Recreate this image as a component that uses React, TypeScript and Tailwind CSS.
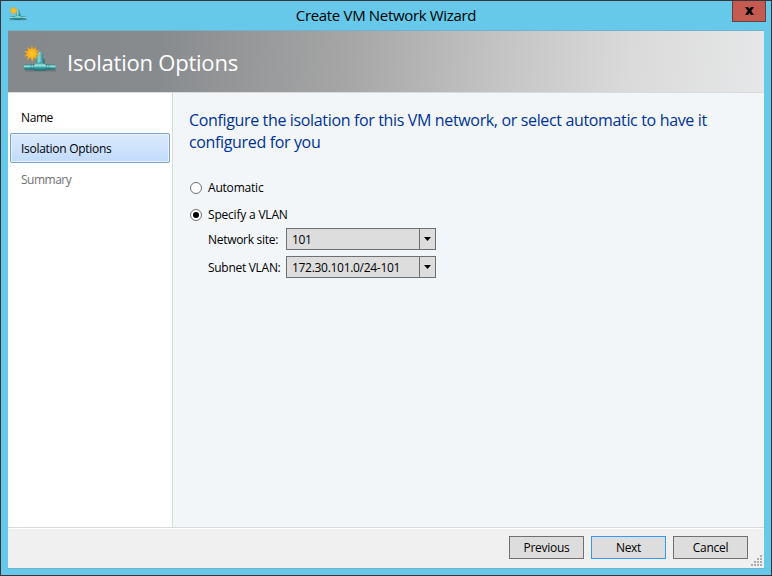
import React from "react";

function NetworkIcon({ className, small = false }: { className: string; small?: boolean }) {
  return (
    <svg className={className} viewBox="0 0 34 28" preserveAspectRatio="none" aria-hidden="true">
      <defs>
        <linearGradient id={small ? "ps" : "pl"} x1="0" y1="0" x2="0" y2="1">
          <stop offset="0" stopColor="#2c8c90" />
          <stop offset="0.35" stopColor="#a5e6e2" />
          <stop offset="0.65" stopColor="#38a0a3" />
          <stop offset="1" stopColor="#14666c" />
        </linearGradient>
        <linearGradient id={small ? "vs" : "vl"} x1="0" y1="0" x2="1" y2="0">
          <stop offset="0" stopColor="#2b9196" />
          <stop offset="0.35" stopColor="#8fdcd9" />
          <stop offset="1" stopColor="#14666c" />
        </linearGradient>
        <radialGradient id={small ? "ss" : "sl"}>
          <stop offset="0" stopColor="#ffc928" />
          <stop offset="0.6" stopColor="#fbae17" />
          <stop offset="1" stopColor="#e9920f" />
        </radialGradient>
      </defs>
      <path d="M2 24.500h31v2H2z" fill="#555f63" opacity="0.5" />
      <path d="M14.500 9Q15 6.500 17.200 6.500T20 9V13L21.500 14.500V20H13V14z" fill={small ? "url(#vs)" : "url(#vl)"} />
      <rect x="1" y="19.500" width="31.500" height="5" rx="1" fill={small ? "url(#ps)" : "url(#pl)"} />
      <path d="M11 20.500Q13 17.500 17 17.500T23 20.500V25.500H11z" fill={small ? "url(#ps)" : "url(#pl)"} />
      <path d="M10.500 19.500v5.500M23.500 19.500v5.500M8 19.500v5M26 19.500v5" stroke="#17696f" strokeWidth="0.600" opacity="0.7" />
      <path
        d="M9 .2L10.200 4.500 13.200 1.600 12.700 5.600 16.800 5 13.400 7.800 17.200 10.200 12.900 10.300 14.300 14.600 10.900 12.200 9.400 17 7.600 12.400 3.800 15.300 5 10.900.8 11.400 4.300 8.600.8 6 5.200 6 4 1.800 7.500 4.500z"
        fill={small ? "url(#ss)" : "url(#sl)"}
      />
    </svg>
  );
}

function Radio({ label, checked = false }: { label: string; checked?: boolean }) {
  return (
    <label className="flex h-[16px] items-center">
      <span className="mr-[6px] flex size-[12px] items-center justify-center rounded-full border border-[#707070] bg-white">
        {checked && <span className="size-[6px] rounded-full bg-black" />}
      </span>
      <span className="text-[12px] leading-[16px] tracking-[-0.2px]">{label}</span>
    </label>
  );
}

function SelectRow({ label, value }: { label: string; value: string }) {
  return (
    <div className="flex h-[22px] items-center pl-[19px]">
      <span className="w-[78px] pt-[2px] text-[12px] leading-[16px] tracking-[-0.29px]">{label}</span>
      <button className="flex h-[22px] w-[150px] border border-[#707070] bg-[#dddddd] text-left">
        <span className="flex-1 pt-[2px] pl-[5px] text-[12px] leading-[17px] tracking-[-0.3px]">{value}</span>
        <span className="flex h-full w-[16px] items-center justify-center border-l border-[#707070]">
          <svg width="7" height="4" viewBox="0 0 7 4">
            <path d="M0 0h7L3.500 4z" />
          </svg>
        </span>
      </button>
    </div>
  );
}

function Button({ label, primary = false }: { label: string; primary?: boolean }) {
  return (
    <button
      className={`h-[23px] w-[75px] border bg-[#dddddd] text-[12px] leading-[21px] tracking-[-0.28px] ${
        primary ? "border-[#3399ff]" : "border-[#707070]"
      }`}
    >
      {label}
    </button>
  );
}

export default function App() {
  return (
    <div className="relative flex h-[576px] w-[772px] flex-col overflow-hidden border border-[#3b353b] bg-[#66c9ea] px-[7px] font-['Open_Sans','Noto_Sans',sans-serif] text-[12px] text-black">
      <header className="relative flex h-[29px] shrink-0 items-start justify-center">
        <NetworkIcon small className="absolute top-[5px] left-[1px] h-[15px] w-[18px]" />
        <h1 className="pt-[4px] text-[15px] leading-[20px] tracking-[-0.33px]">Create VM Network Wizard</h1>
        <button className="absolute top-0 right-[-2px] flex h-[21px] w-[34px] items-center justify-center border border-t-0 border-[#604043] bg-[#c55a51]">
          <svg width="9" height="8" viewBox="0 0 9 8">
            <path d="M0 0h3l1.500 2L6 0h3L6.200 4 9 8H6L4.500 6 3 8H0l2.800-4z" />
          </svg>
        </button>
      </header>

      <main className="flex h-[539px] flex-col border-y border-[#72b2ca] bg-[#f2f6f9]">
        <div className="flex h-[62px] shrink-0 items-center border-b border-[#d8dadc] bg-[linear-gradient(95deg,#85898c_0%,#888b8e_20%,#a6a6a6_45%,#c4c4c4_65%,#dadada_82%,#e6e7e8_100%)]">
          <NetworkIcon className="ml-[15px] h-[28px] w-[34px] -translate-y-[3px]" />
          <h2 className="ml-[10px] text-[22px] leading-[30px] tracking-[-0.22px] text-white">Isolation Options</h2>
        </div>

        <div className="flex h-[434px] shrink-0">
          <nav className="w-[165px] border-r border-[#d7d9db] bg-white px-[2px] pt-[9px]">
            <div className="h-[31px] pl-[11px] leading-[32px] tracking-[-0.4px]">Name</div>
            <div className="h-[30px] w-[160px] rounded-[2px] border border-[#7da2ce] bg-linear-to-b from-[#dceafc] to-[#c1dbfc] pl-[10px] leading-[30px] tracking-[-0.28px] shadow-[inset_0_0_0_1px_#e6f1fd]">
              Isolation Options
            </div>
            <div className="h-[31px] pl-[11px] leading-[33px] tracking-[-0.5px] text-[#707070]">Summary</div>
          </nav>
          <section className="flex-1 pt-[16px] pl-[16px]">
            <h3 className="w-[550px] text-[16px] leading-[22px] tracking-[-0.35px] text-[#003399]">
              Configure the isolation for this VM network, or select automatic to have it
              <br />
              configured for you
            </h3>
            <div className="mt-[27px] pl-px">
              <Radio label="Automatic" />
              <div className="h-[11px]" />
              <Radio label="Specify a VLAN" checked />
            </div>
            <div className="mt-[5px] flex flex-col gap-[6px]">
              <SelectRow label="Network site:" value="101" />
              <SelectRow label="Subnet VLAN:" value="172.30.101.0/24-101" />
            </div>
          </section>
        </div>

        <footer className="relative flex h-[41px] shrink-0 justify-end gap-[7px] border-t border-[#d7d9db] bg-[#f0f0f0] pt-[8px] pr-[16px] shadow-[inset_0_1px_0_white]">
          <Button label="Previous" />
          <Button label="Next" primary />
          <Button label="Cancel" />
          <svg className="absolute right-[2px] bottom-[2px] size-[11px]" viewBox="0 0 11 11" fill="#adadad" shapeRendering="crispEdges">
            <path d="M9 0h2v2H9zM6 3h2v2H6zM9 3h2v2H9zM3 6h2v2H3zM6 6h2v2H6zM9 6h2v2H9zM0 9h2v2H0zM3 9h2v2H3zM6 9h2v2H6zM9 9h2v2H9z" />
          </svg>
        </footer>
      </main>
    </div>
  );
}
